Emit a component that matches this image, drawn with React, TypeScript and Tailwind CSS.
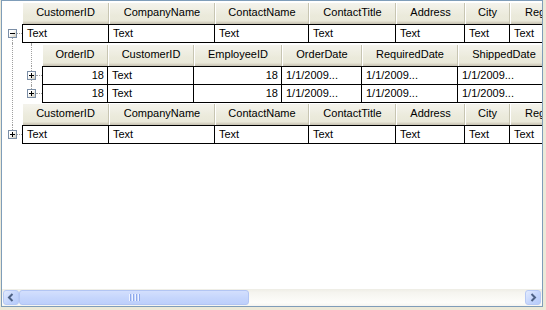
import React from 'react';

type Col = { n: string; hw: string; dw: string; v: string; right?: boolean };

const L1: Col[] = [
  { n: 'CustomerID', hw: 'w-[87px]', dw: 'w-[86px]', v: 'Text' },
  { n: 'CompanyName', hw: 'w-[106px]', dw: 'w-[106px]', v: 'Text' },
  { n: 'ContactName', hw: 'w-[94px]', dw: 'w-[94px]', v: 'Text' },
  { n: 'ContactTitle', hw: 'w-[87px]', dw: 'w-[87px]', v: 'Text' },
  { n: 'Address', hw: 'w-[69px]', dw: 'w-[69px]', v: 'Text' },
  { n: 'City', hw: 'w-[45px]', dw: 'w-[45px]', v: 'Text' },
  { n: 'Region', hw: 'w-[65px]', dw: 'w-[65px]', v: 'Text' },
];

const L2: Col[] = [
  { n: 'OrderID', hw: 'w-[66px]', dw: 'w-[65px]', v: '18', right: true },
  { n: 'CustomerID', hw: 'w-[86px]', dw: 'w-[86px]', v: 'Text' },
  { n: 'EmployeeID', hw: 'w-[88px]', dw: 'w-[88px]', v: '18', right: true },
  { n: 'OrderDate', hw: 'w-[80px]', dw: 'w-[80px]', v: '1/1/2009...' },
  { n: 'RequiredDate', hw: 'w-[96px]', dw: 'w-[96px]', v: '1/1/2009...' },
  { n: 'ShippedDate', hw: 'w-[92px]', dw: 'w-[92px]', v: '1/1/2009...' },
];

const DOT = 'border-dotted border-[#a0a0a0]';

function Box({ plus }: { plus: boolean }) {
  return (
    <div className="relative flex h-[9px] w-[9px] items-center justify-center border border-[#7b8ea6] bg-[linear-gradient(135deg,#ffffff_35%,#cdcabc)]">
      <div className="h-px w-[5px] bg-black" />
      {plus && <div className="absolute h-[5px] w-px bg-black" />}
    </div>
  );
}

function Gutter({
  lvl,
  top,
  bottom,
  plus,
  topH = 'h-[5px]',
}: {
  lvl: 1 | 2;
  top: boolean;
  bottom: boolean;
  plus: boolean;
  topH?: string;
}) {
  const line = lvl === 1 ? 'ml-[10px]' : 'ml-[9px]';
  const boxMl = lvl === 1 ? 'ml-[6px]' : 'ml-[5px]';
  return (
    <div className="flex w-[20px] shrink-0 flex-col">
      <div className={`${topH} ${line} ${top ? `border-l ${DOT}` : ''}`} />
      <div className="flex h-[9px] items-center">
        <div className={boxMl}>
          <Box plus={plus} />
        </div>
        <div className={`h-0 flex-1 border-t ${DOT}`} />
      </div>
      <div className={`flex-1 ${line} ${bottom ? `border-l ${DOT}` : ''}`} />
    </div>
  );
}

function VLine({ lvl }: { lvl: 1 | 2 }) {
  return (
    <div className="flex w-[20px] shrink-0">
      <div className={`${lvl === 1 ? 'ml-[10px]' : 'ml-[9px]'} border-l ${DOT}`} />
    </div>
  );
}

function Headers({ cols }: { cols: Col[] }) {
  return (
    <div className="flex h-full">
      {cols.map((c) => (
        <div
          key={c.n}
          className={`${c.hw} flex h-full shrink-0 items-center justify-center overflow-hidden whitespace-nowrap bg-[linear-gradient(to_bottom,#f4f3ec,#ebeadb_60%,#e9e8d9)] pb-[2px] shadow-[inset_-1px_0_0_#c7c5b2,inset_1px_0_0_#ffffff,inset_0_-1px_0_#cbc7b8,inset_0_-2px_0_#d6d2c2,inset_0_-3px_0_#e2dfd0]`}
        >
          {c.n}
        </div>
      ))}
    </div>
  );
}

function Cells({ cols, borders }: { cols: Col[]; borders: string }) {
  return (
    <div className={`flex h-full border-l border-black ${borders}`}>
      {cols.map((c) => (
        <div
          key={c.n}
          className={`${c.dw} flex shrink-0 items-center overflow-hidden whitespace-nowrap border-r border-black ${
            c.right ? 'justify-end pr-[3px]' : 'pl-[4px]'
          }`}
        >
          {c.v}
        </div>
      ))}
    </div>
  );
}

function Arrow({ dir }: { dir: 'left' | 'right' }) {
  return (
    <div className="flex w-[16px] shrink-0 items-center justify-center rounded-[3px] border border-[#b7c9f4] bg-[linear-gradient(135deg,#e3ebfe,#c4d5fc_55%,#b6cbfa)]">
      <svg width="8" height="9" viewBox="0 0 8 9">
        <polyline
          points={dir === 'left' ? '5.5,1 2,4.5 5.5,8' : '2.5,1 6,4.5 2.5,8'}
          fill="none"
          stroke="#4d6185"
          strokeWidth="2"
        />
      </svg>
    </div>
  );
}

export default function App() {
  return (
    <div className="h-[310px] w-[546px] bg-[#ece9d8] pl-px font-['Liberation_Sans',Arial,sans-serif] text-[11px] leading-none text-black">
      <div className="flex h-[307px] w-[542px] flex-col border border-[#7f9db9] bg-white">
        <div className="flex-1 overflow-hidden pt-[2px]">
          <div className="flex h-[21px]">
            <div className="w-[20px] shrink-0" />
            <Headers cols={L1} />
          </div>
          <div className="flex h-[19px]">
            <Gutter lvl={1} top={false} bottom plus={false} />
            <Cells cols={L1} borders="border-y" />
          </div>
          <div className="flex">
            <VLine lvl={1} />
            <div className="flex flex-col">
              <div className="flex h-[2px]">
                <VLine lvl={2} />
              </div>
              <div className="flex h-[21px]">
                <VLine lvl={2} />
                <Headers cols={L2} />
              </div>
              <div className="flex h-[19px]">
                <Gutter lvl={2} top bottom plus />
                <Cells cols={L2} borders="border-y" />
              </div>
              <div className="flex h-[18px]">
                <Gutter lvl={2} top bottom={false} plus topH="h-[4px]" />
                <Cells cols={L2} borders="border-b" />
              </div>
              <div className="h-px" />
              <div className="flex h-[21px]">
                <Headers cols={L1} />
              </div>
            </div>
          </div>
          <div className="flex h-[19px]">
            <Gutter lvl={1} top bottom={false} plus />
            <Cells cols={L1} borders="border-y" />
          </div>
        </div>
        <div className="flex h-[17px] shrink-0 bg-[linear-gradient(to_bottom,#eeede5,#f5f4ef_20%,#fdfdfa_80%,#f6f5f0)] p-px">
          <Arrow dir="left" />
          <div className="flex w-[230px] shrink-0 items-center justify-center gap-px rounded-[3px] border border-[#b2c5f3] bg-[linear-gradient(to_bottom,#d3dffd,#c6d6fc_50%,#bdcffb)]">
            {[0, 1, 2, 3].map((i) => (
              <div key={i} className="flex">
                <div className="h-[7px] w-px bg-[#eef3ff]" />
                <div className="h-[7px] w-px bg-[#8ea9ec]" />
              </div>
            ))}
          </div>
          <div className="flex-1" />
          <Arrow dir="right" />
        </div>
      </div>
    </div>
  );
}
